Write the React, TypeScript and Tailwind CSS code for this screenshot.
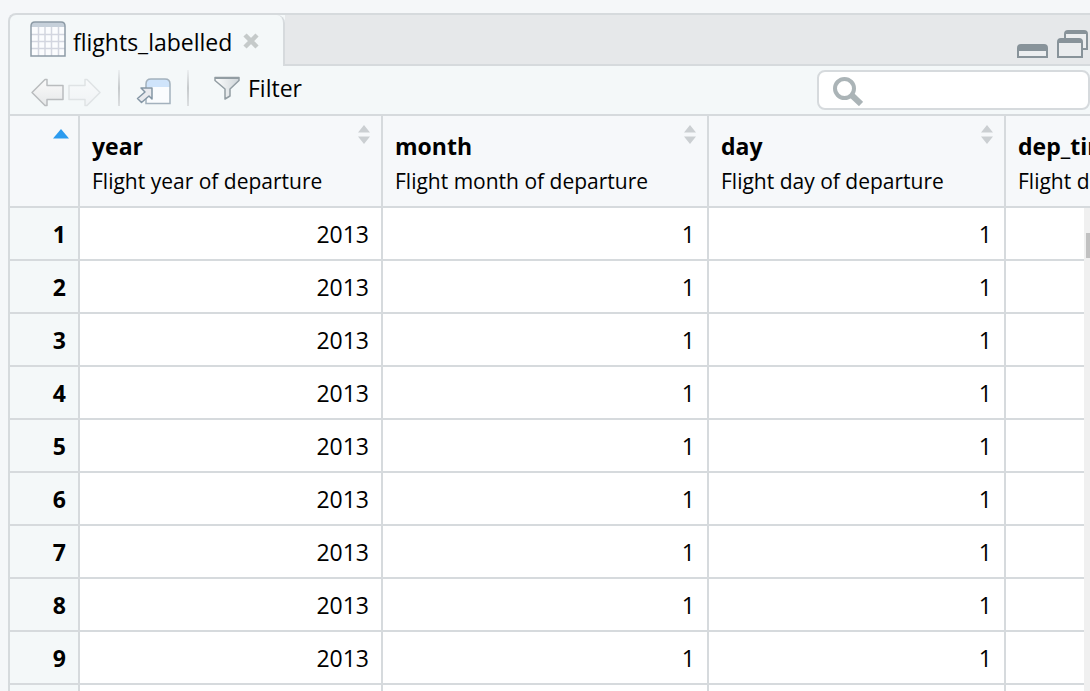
import React from "react";

type Column = { name: string; label: string; value: string };

const columns: Column[] = [
  { name: "year", label: "Flight year of departure", value: "2013" },
  { name: "month", label: "Flight month of departure", value: "1" },
  { name: "day", label: "Flight day of departure", value: "1" },
  { name: "dep_time", label: "Flight departure time", value: "" },
];

const rows = [1, 2, 3, 4, 5, 6, 7, 8, 9, 10];

function TableIcon() {
  return (
    <svg width="36" height="36" viewBox="0 0 36 36" aria-hidden="true">
      <path d="M1 35V5q0-4 4-4h26q4 0 4 4v30z" fill="#fbfcfe" />
      <path d="M1 6V5q0-4 4-4h26q4 0 4 4v1z" fill="#c6d0da" />
      <path d="M8.5 6v29M15 6v29M21.500 6v29M28.500 6v29M1 13.500h34M1 20.500h34M1 27.500h34" stroke="#d3d6e0" strokeWidth="1.500" />
      <path d="M1 35V5q0-4 4-4h26q4 0 4 4v30z" fill="none" stroke="#8d9ba6" strokeWidth="1.500" />
    </svg>
  );
}

function CloseIcon() {
  return (
    <svg width="16" height="16" viewBox="0 0 16 16" aria-hidden="true">
      <path d="M2 2l12 12M14 2L2 14" stroke="#c5caca" strokeWidth="4.500" />
    </svg>
  );
}

function ArrowIcon({ forward = false }: { forward?: boolean }) {
  return (
    <svg width="34" height="29" viewBox="0 0 34 29" aria-hidden="true">
      <defs>
        <linearGradient id={forward ? "fwd" : "back"} x1="0" y1="0" x2="0" y2="1">
          <stop offset="0" stopColor={forward ? "#f8fafb" : "#fafafa"} />
          <stop offset="1" stopColor={forward ? "#f0f3f5" : "#e6e8e9"} />
        </linearGradient>
      </defs>
      <path
        d={forward ? "M1 7.500h16V1.500h2l13 13-13 13h-2v-6H1z" : "M33 7.500H17V1.500h-2l-13 13 13 13h2v-6h16z"}
        fill={forward ? "url(#fwd)" : "url(#back)"}
        stroke={forward ? "#dfe3e5" : "#b9bcbe"}
        strokeWidth="1.500"
        strokeLinejoin="round"
      />
    </svg>
  );
}

function PopoutIcon() {
  return (
    <svg width="35" height="27" viewBox="0 0 35 27" aria-hidden="true">
      <path d="M10 25.500V6q0-5 5-5h14q5 0 5 5v19.500z" fill="#fafcfe" />
      <path d="M10 9V6q0-5 5-5h14q5 0 5 5v3z" fill="#cfe4fb" />
      <path d="M10 25.500V6q0-5 5-5h14q5 0 5 5v19.500z" fill="none" stroke="#a3b1bd" strokeWidth="1.500" />
      <path d="M5 10h11v11l-3-3-7.500 6.500-4-4L9 14z" fill="#e9eaee" stroke="#8496a5" strokeWidth="1.500" strokeLinejoin="round" />
    </svg>
  );
}

function FilterIcon() {
  return (
    <svg width="26" height="24" viewBox="0 0 26 24" aria-hidden="true">
      <defs>
        <linearGradient id="funnel" x1="0" y1="0" x2="1" y2="0">
          <stop offset="0" stopColor="#fcfdfd" />
          <stop offset="1" stopColor="#d0d6da" />
        </linearGradient>
      </defs>
      <path d="M1 1.500h24v3l-9 8.500v7l-5 3V13L1 4.500z" fill="url(#funnel)" stroke="#929da3" strokeWidth="1.500" strokeLinejoin="round" />
      <path d="M1 2h24" stroke="#929da3" strokeWidth="2" />
    </svg>
  );
}

function MinimizeIcon() {
  return (
    <svg width="31" height="14" viewBox="0 0 31 14" aria-hidden="true">
      <path d="M1 13V4q0-3 3-3h23q3 0 3 3v9z" fill="#eceef0" stroke="#88939a" strokeWidth="2" />
      <path d="M1 7V4q0-3 3-3h23q3 0 3 3v3z" fill="#88939a" />
    </svg>
  );
}

function RestoreIcon() {
  return (
    <svg width="31" height="28" viewBox="0 0 31 28" aria-hidden="true">
      <path d="M8 9V4q0-3 3-3h16q3 0 3 3v15h-7" fill="#eceef0" stroke="#88939a" strokeWidth="2" />
      <path d="M8 4V3q0-2 3-2h16q3 0 3 3z" fill="#88939a" />
      <path d="M1 27V12q0-3 3-3h18q3 0 3 3v15z" fill="#eaecee" stroke="#88939a" strokeWidth="2" />
      <path d="M1 13v-1q0-3 3-3h18q3 0 3 3v1z" fill="#88939a" />
    </svg>
  );
}

function SearchIcon() {
  return (
    <svg width="30" height="29" viewBox="0 0 30 29" className="shrink-0" aria-hidden="true">
      <circle cx="11.500" cy="11.500" r="9.500" fill="none" stroke="#abb4b7" strokeWidth="4" />
      <path d="M18 17.500l10 9.500" stroke="#abb4b7" strokeWidth="6" />
    </svg>
  );
}

function SortIcon() {
  return (
    <svg width="12" height="19" viewBox="0 0 12 19" aria-hidden="true">
      <path d="M6 0l6 7.500H0zM0 11.500h12L6 19z" fill="#cbcfd2" />
    </svg>
  );
}

function Divider() {
  return <span className="h-9 w-0.5 bg-linear-to-b from-[#eceff1] via-[#c6cacc] to-[#dcdfe1]" />;
}

export default function App() {
  return (
    <div className="h-screen overflow-hidden bg-[#f5f7f9] pt-[13px] pl-2 font-['Open_Sans','Noto_Sans',sans-serif] text-[23px] leading-8 text-black">
      <main className="flex h-full flex-col rounded-tl-lg border-t-2 border-l-2 border-[#d6dadd] bg-[#f4f8f9]">
        <div className="flex h-[51px] shrink-0">
          <div className="flex w-[275px] shrink-0 items-start rounded-tr-lg border-r-2 border-[#d6dadd] pt-[6px] pl-5">
            <div className="flex items-start gap-[7px]">
              <TableIcon />
              <span className="pt-[5px]">flights_labelled</span>
            </div>
            <button type="button" aria-label="Close tab" className="mt-3 ml-[11px]">
              <CloseIcon />
            </button>
          </div>
          <div className="flex grow items-end justify-end gap-[9px] border-b-2 border-[#d6dadd] bg-[#e6e8ea] pr-0.5 pb-[6px]">
            <button type="button" aria-label="Minimize pane"><MinimizeIcon /></button>
            <button type="button" aria-label="Restore pane"><RestoreIcon /></button>
          </div>
        </div>

        <div className="flex h-[50px] shrink-0 items-center border-b-2 border-[#d6dadd] pl-5">
          <div className="flex items-center gap-1 pt-1">
            <button type="button" aria-label="Back"><ArrowIcon /></button>
            <button type="button" aria-label="Forward"><ArrowIcon forward /></button>
          </div>
          <div className="ml-4 flex h-full items-start gap-4 pt-1">
            <Divider />
            <button type="button" aria-label="Show in new window" className="pt-2"><PopoutIcon /></button>
            <Divider />
          </div>
          <button type="button" className="mb-1 ml-[25px] flex items-center gap-2">
            <FilterIcon />
            <span>Filter</span>
          </button>
          <label className="ml-auto flex h-10 w-[273px] items-center rounded-lg border-2 border-[#d6dadd] bg-white pt-0.5 pl-[14px]">
            <SearchIcon />
            <input type="text" aria-label="Search" className="w-full min-w-0 px-2 outline-none" />
          </label>
        </div>

        <div className="relative min-h-0 grow overflow-hidden">
          <table className="w-[1276px] table-fixed border-separate border-spacing-0">
            <colgroup>
              <col className="w-[70px]" />
              <col className="w-[303px]" />
              <col className="w-[326px]" />
              <col className="w-[297px]" />
              <col className="w-[280px]" />
            </colgroup>
            <thead>
              <tr className="h-[92px] bg-[#f6f8fa] align-top">
                <th aria-label="Row number" className="border-r-2 border-b-2 border-[#d6dadd] pt-[13px] pr-[9px]">
                  <svg width="16" height="10" viewBox="0 0 16 10" className="ml-auto" aria-hidden="true">
                    <path d="M8 0l8 9.500H0z" fill="#2b9bef" />
                  </svg>
                </th>
                {columns.map((c) => (
                  <th key={c.name} className="border-r-2 border-b-2 border-[#d6dadd] pt-[9px] pr-[11px] pl-3 text-left">
                    <div className="flex justify-between">
                      <span className="pt-[5px] font-bold">{c.name}</span>
                      <button type="button" aria-label={"Sort by " + c.name} className="self-start"><SortIcon /></button>
                    </div>
                    <div className="pt-[3px] text-[21px] font-normal whitespace-nowrap">{c.label}</div>
                  </th>
                ))}
              </tr>
            </thead>
            <tbody>
              {rows.map((n) => (
                <tr key={n} className="h-[53px] bg-white text-right">
                  <th className="border-r-2 border-b-2 border-[#d6dadd] bg-[#f4f8f9] pr-3 text-right font-bold">{n}</th>
                  {columns.map((c) => (
                    <td key={c.name} className="border-r-2 border-b-2 border-[#d6dadd] pr-3">{c.value}</td>
                  ))}
                </tr>
              ))}
            </tbody>
          </table>
          <div className="absolute top-[92px] right-0 bottom-0 w-[6px] bg-[#f0f0f0] pt-[25px] pl-0.5">
            <div className="h-[25px] bg-[#c1c1c1]" />
          </div>
        </div>
      </main>
    </div>
  );
}
